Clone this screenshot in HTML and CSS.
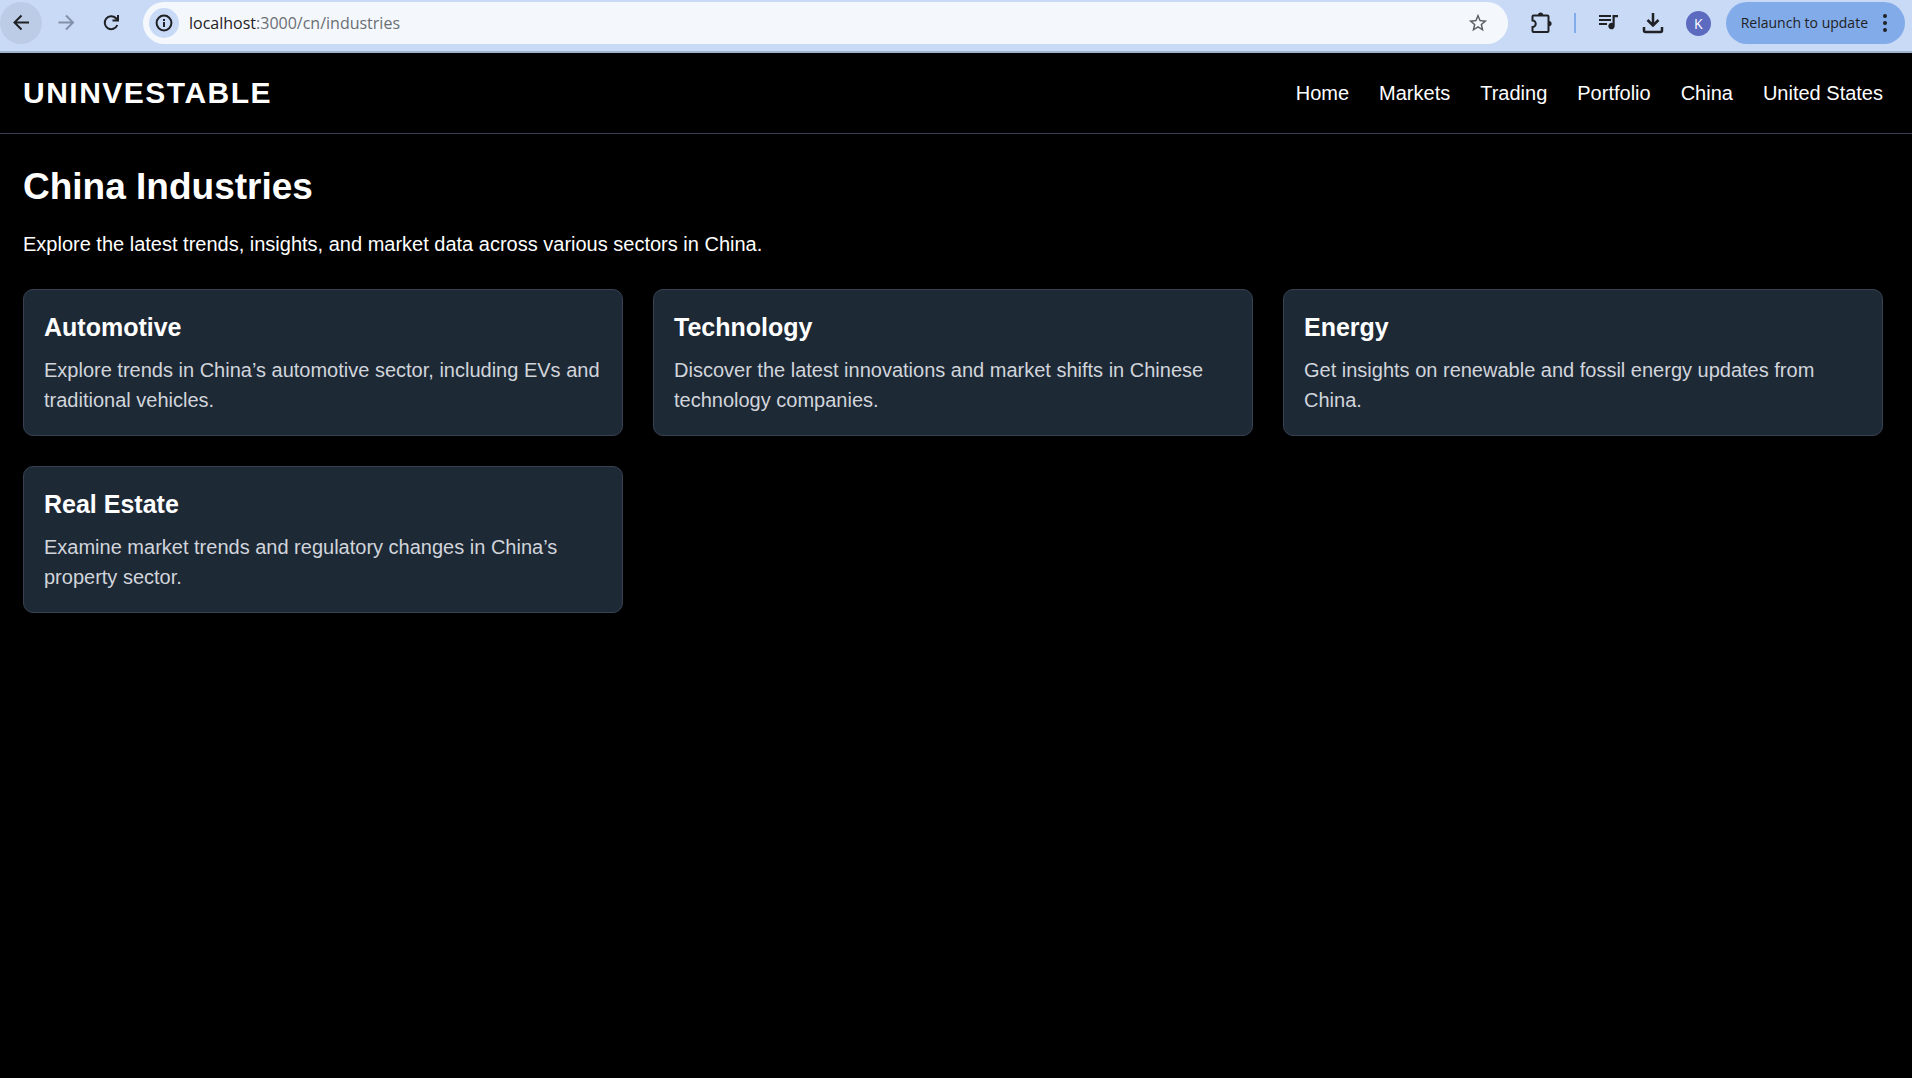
FILE: index.html
```html
<!DOCTYPE html>
<html lang="en">
<head>
<meta charset="utf-8">
<meta name="viewport" content="width=device-width, initial-scale=1">
<title>China Industries</title>
<link rel="stylesheet" href="styles.css">
</head>
<body>
<div class="toolbar">
  <div class="toolbar-nav">
    <button class="icon-button icon-button-active" type="button" aria-label="Back">
      <svg class="icon" viewBox="0 0 22 22"><path class="stroke" d="M19 10.500H5M11.500 3.500l-7 7 7 7"/></svg>
    </button>
    <button class="icon-button icon-button-muted" type="button" aria-label="Forward">
      <svg class="icon" viewBox="0 0 22 22"><path class="stroke" d="M3.500 10.500h14M11 3.500l7 7-7 7"/></svg>
    </button>
    <button class="icon-button" type="button" aria-label="Reload">
      <svg class="icon" viewBox="0 0 22 22"><path class="stroke" d="M17.300 13A6.500 6.500 0 1 1 16 6.200l1.500 1.800M18 3v5.500h-5.500"/></svg>
    </button>
  </div>
  <div class="address">
    <button class="site-info" type="button" aria-label="View site information">
      <svg class="icon-small" viewBox="0 0 20 20"><circle class="stroke" cx="10" cy="10" r="7.400"/><path d="M9 9h2v5H9zM9 6h2v2H9z"/></svg>
    </button>
    <a class="url" href="#"><span class="url-host">localhost</span>:3000/cn/industries</a>
    <button class="bookmark" type="button" aria-label="Bookmark this page">
      <svg class="icon" viewBox="0 0 24 24"><path d="M22 9.240l-7.190-.62L12 2 9.190 8.630 2 9.240l5.460 4.730L5.820 21 12 17.270 18.180 21l-1.630-7.030L22 9.240zM12 15.400l-3.760 2.270 1-4.280-3.320-2.880 4.380-.38L12 6.100l1.710 4.040 4.380.38-3.320 2.880 1 4.280L12 15.400z"/></svg>
    </button>
  </div>
  <div class="toolbar-actions">
    <button class="icon-button" type="button" aria-label="Extensions">
      <svg class="icon" viewBox="0 0 22 22"><path class="stroke" d="M3.500 3.500h14q1 0 1 1v14.500q0 1-1 1h-14q-1 0-1-1v-4a3.200 3.200 0 0 0 0-6.500v-4q0-1 1-1z"/><path d="M8 3a2.600 2.600 0 0 1 5.200 0zM19 9a2.600 2.600 0 0 1 0 5.200z"/></svg>
    </button>
    <span class="divider"></span>
    <button class="icon-button" type="button" aria-label="Media controls">
      <svg class="icon" viewBox="0 0 22 22"><path d="M1 3h12v2H1zM1 7h12v2H1zM1 11h8v2H1zM14.500 3H20v2.200h-3.300V14a3.200 3.200 0 1 1-2.200-3z"/></svg>
    </button>
    <button class="icon-button download" type="button" aria-label="Downloads">
      <svg class="icon" viewBox="0 0 22 22"><path class="stroke stroke-bold" d="M11 1v12M5.500 8l5.500 5.500L16.500 8M2 15v3.500q0 1.500 1.500 1.500h15q1.500 0 1.500-1.500V15"/></svg>
    </button>
    <button class="profile" type="button" aria-label="Profile K">K</button>
    <button class="relaunch" type="button">Relaunch to update
      <svg class="dots" viewBox="0 0 4 18"><circle cx="2" cy="2" r="2"/><circle cx="2" cy="9" r="2"/><circle cx="2" cy="16" r="2"/></svg>
    </button>
  </div>
</div>

<header class="site-header">
  <a class="logo" href="#">UNINVESTABLE</a>
  <nav class="site-nav">
    <a href="#">Home</a>
    <a href="#">Markets</a>
    <a href="#">Trading</a>
    <a href="#">Portfolio</a>
    <a href="#">China</a>
    <a href="#">United States</a>
  </nav>
</header>

<main class="content">
  <h1 class="page-title">China Industries</h1>
  <p class="intro">Explore the latest trends, insights, and market data across various sectors in China.</p>
  <div class="cards">
    <a class="card" href="#">
      <h2 class="card-title">Automotive</h2>
      <p class="card-text">Explore trends in China’s automotive sector, including EVs and traditional vehicles.</p>
    </a>
    <a class="card" href="#">
      <h2 class="card-title">Technology</h2>
      <p class="card-text">Discover the latest innovations and market shifts in Chinese technology companies.</p>
    </a>
    <a class="card" href="#">
      <h2 class="card-title">Energy</h2>
      <p class="card-text">Get insights on renewable and fossil energy updates from China.</p>
    </a>
    <a class="card" href="#">
      <h2 class="card-title">Real Estate</h2>
      <p class="card-text">Examine market trends and regulatory changes in China’s property sector.</p>
    </a>
  </div>
</main>
</body>
</html>
```
FILE: styles.css
```css
* {
  box-sizing: border-box;
}

body {
  margin: 0;
  min-height: 100vh;
  background: #000;
  color: #fff;
  font-family: "Liberation Sans", Arial, sans-serif;
  font-size: 20px;
  line-height: 30px;
}

h1,
h2,
p {
  margin: 0;
}

a {
  color: inherit;
  text-decoration: none;
}

button {
  border: 0;
  padding: 0;
  background: none;
  color: inherit;
  font: inherit;
}

svg {
  display: block;
  fill: currentColor;
}

.stroke {
  fill: none;
  stroke: currentColor;
  stroke-width: 2;
}

.stroke-bold {
  stroke-width: 2.5;
}

/* Browser toolbar */
.toolbar {
  display: flex;
  align-items: flex-start;
  height: 53px;
  padding: 2px 7px 0 0;
  border-bottom: 2px solid #9fb2ce;
  background: #c9daf7;
  color: #1f2125;
  font-family: "Open Sans", "Noto Sans", sans-serif;
}

.toolbar-nav {
  display: flex;
  gap: 3px;
}

.icon-button {
  display: grid;
  place-items: center;
  width: 42px;
  height: 42px;
  border-radius: 50%;
}

.icon-button-active {
  background: #bccce6;
}

.icon-button-muted {
  color: #8490a8;
}

.icon {
  width: 22px;
  height: 22px;
}

.icon-small {
  width: 20px;
  height: 20px;
}

.address {
  display: flex;
  flex: 1;
  align-items: center;
  height: 42px;
  margin-left: 11px;
  padding: 0 19px 0 6px;
  border-radius: 21px;
  background: #f4f8fd;
}

.site-info {
  display: grid;
  place-items: center;
  width: 30px;
  height: 30px;
  border-radius: 50%;
  background: #c9daf7;
}

.url {
  flex: 1;
  margin-left: 10px;
  color: #6a6e73;
  font-size: 16px;
}

.url-host {
  color: #1f2125;
}

.bookmark {
  color: #5b5e63;
}

.toolbar-actions {
  display: flex;
  align-items: center;
  height: 42px;
  padding-left: 12px;
}

.divider {
  width: 2px;
  height: 20px;
  margin: 0 12px;
  background: #82ace9;
}

.download {
  margin-left: 2px;
}

.profile {
  width: 25px;
  height: 25px;
  margin: 0 15px 0 12px;
  border-radius: 50%;
  background: #5c6bc0;
  color: #fff;
  font-size: 14px;
  line-height: 25px;
}

.relaunch {
  display: flex;
  align-items: center;
  gap: 15px;
  height: 42px;
  padding: 0 18px 0 15px;
  border-radius: 21px;
  background: #82ace9;
  font-size: 14px;
}

.dots {
  width: 4px;
  height: 18px;
}

/* Site header */
.site-header {
  display: flex;
  align-items: center;
  justify-content: space-between;
  padding: 20px 29px 20px 23px;
  border-bottom: 1px solid #374151;
}

.logo {
  font-size: 30px;
  font-weight: 700;
  line-height: 40px;
  letter-spacing: 0.05em;
}

.site-nav {
  display: flex;
  gap: 30px;
}

/* Page content */
.content {
  padding: 30px 29px 30px 23px;
}

.page-title {
  margin-bottom: 20px;
  font-size: 37px;
  line-height: 45px;
}

.intro {
  margin-bottom: 30px;
}

.cards {
  display: grid;
  grid-template-columns: repeat(3, 1fr);
  gap: 30px;
}

.card {
  padding: 20px;
  border: 1px solid #374151;
  border-radius: 10px;
  background: #1e2936;
}

.card-title {
  margin-bottom: 10px;
  font-size: 25px;
  line-height: 35px;
}

.card-text {
  color: #d1d5db;
}

@media (max-width: 1000px) {
  .cards {
    grid-template-columns: 1fr;
  }
}
```
